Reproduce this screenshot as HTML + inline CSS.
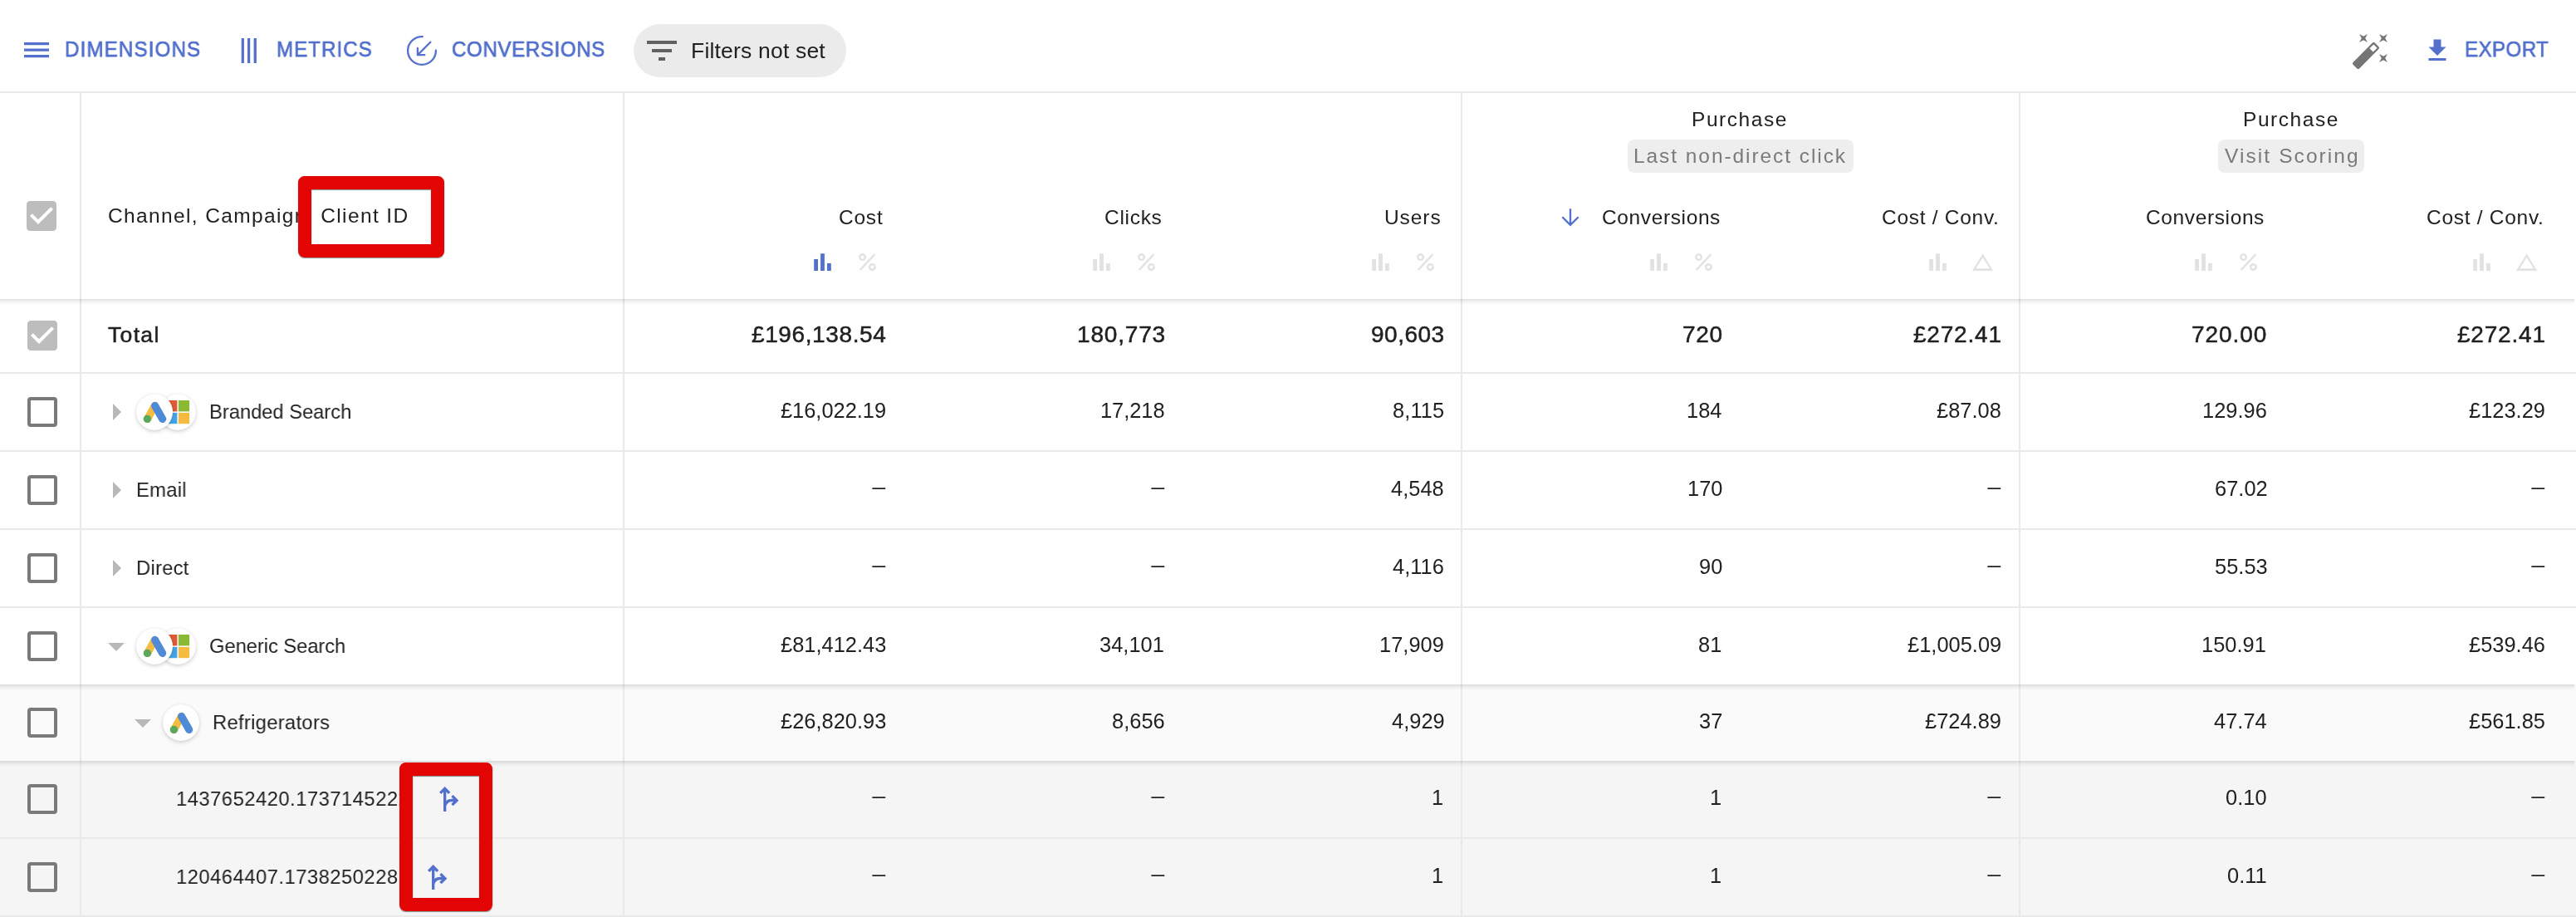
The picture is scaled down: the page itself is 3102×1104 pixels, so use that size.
<!DOCTYPE html>
<html lang="en"><head><meta charset="utf-8"><title>Report table</title>
<style>
html,body{margin:0;padding:0}
body{width:3102px;height:1104px;overflow:hidden;position:relative;background:#fff;font-family:'Liberation Sans',sans-serif;color:#212121}
.a{position:absolute}
.t{position:absolute;white-space:nowrap;line-height:1;will-change:transform}
.hl{position:absolute;left:0;width:3102px;height:2px;background:#ebe9e8}
.vl{position:absolute;width:2px;background:#ebe9e8}
.cb{position:absolute;left:33px;width:28px;height:28px;border:4px solid #7a7a7a;border-radius:4px}
.cbc{position:absolute;left:33px;width:36px;height:36px;background:#bdbdbd;border-radius:4px}
.ic{position:absolute;width:44px;height:44px;border-radius:50%;background:#fff;box-shadow:0 2px 5px rgba(0,0,0,.16),0 0 2px rgba(0,0,0,.08)}
.chip{position:absolute;background:#eee;border-radius:8px;height:40px;top:168px}
.red{position:absolute;box-sizing:border-box;border:16px solid #e30404;border-radius:7.5px;box-shadow:0 1px 1px rgba(0,40,40,.5),inset 0 1px 1px rgba(0,40,40,.5)}
svg{position:absolute;overflow:visible}
</style></head><body>
<div class="a" style="left:0;top:824px;width:3102px;height:92px;background:#fafafa"></div>
<div class="a" style="left:0;top:916px;width:3102px;height:188px;background:#f5f5f5"></div>
<div class="hl" style="top:110px"></div>
<div class="hl" style="top:448px"></div>
<div class="hl" style="top:542px"></div>
<div class="hl" style="top:636px"></div>
<div class="hl" style="top:730px"></div>
<div class="hl" style="top:1008px"></div>
<div class="hl" style="top:1102px"></div>
<div class="vl" style="left:96px;top:112px;height:992px"></div>
<div class="vl" style="left:750px;top:112px;height:992px"></div>
<div class="vl" style="left:1759px;top:112px;height:992px"></div>
<div class="vl" style="left:2431px;top:112px;height:992px"></div>
<div class="a" style="left:0;top:360px;width:3100px;height:8px;background:linear-gradient(to bottom,rgba(0,0,0,0.12) 0,rgba(0,0,0,0.066) 30%,rgba(0,0,0,0.018) 65%,rgba(0,0,0,0) 100%)"></div>
<div class="a" style="left:0;top:824px;width:3100px;height:8px;background:linear-gradient(to bottom,rgba(0,0,0,0.12) 0,rgba(0,0,0,0.066) 30%,rgba(0,0,0,0.018) 65%,rgba(0,0,0,0) 100%)"></div>
<div class="a" style="left:0;top:916px;width:3100px;height:8px;background:linear-gradient(to bottom,rgba(0,0,0,0.12) 0,rgba(0,0,0,0.066) 30%,rgba(0,0,0,0.018) 65%,rgba(0,0,0,0) 100%)"></div>
<div class="a" style="left:763px;top:29px;width:256px;height:64px;border-radius:32px;background:#ebebeb"></div>
<svg style="left:29px;top:51px" width="30" height="19" viewBox="0 0 30 19"><path fill="#5270cc" d="M0 0h30v3.2H0zM0 7.6h30v3.2H0zM0 15.1h30v3.2H0z"/></svg>
<svg style="left:290px;top:46px" width="20" height="30" viewBox="0 0 20 30"><path fill="#5270cc" d="M0.7 0h3.2v30H0.7zM8 0h3.2v30H8zM15.6 0h3.3v30h-3.3z"/></svg>
<svg style="left:488px;top:41px" width="40" height="40" viewBox="0 0 40 40" fill="none" stroke="#5270cc" stroke-width="2.3" stroke-linecap="round" stroke-linejoin="round"><path d="M36.9 19.6A16.9 16.9 0 1 1 20.8 3.1"/><path d="M30.3 9.8L14.9 25.2M14.9 17v8.2h8.4"/></svg>
<svg style="left:773px;top:37px" width="48" height="48" viewBox="0 0 24 24"><path fill="#616161" d="M10 18h4v-2h-4v2zM3 6v2h18V6H3zm3 7h12v-2H6v2z"/></svg>
<svg style="left:2831px;top:37px" width="48" height="48" viewBox="0 0 24 24"><path fill="#757575" d="M7.5 5.6 10 7 8.6 4.5 10 2 7.5 3.4 5 2l1.4 2.5L5 7zm12 9.8L17 14l1.4 2.5L17 19l2.5-1.4L22 19l-1.4-2.5L22 14zM22 2l-2.5 1.4L17 2l1.4 2.5L17 7l2.5-1.4L22 7l-1.4-2.5zm-7.63 5.29a.9959.9959 0 0 0-1.41 0L1.29 18.96c-.39.39-.39 1.02 0 1.41l2.34 2.34c.39.39 1.02.39 1.41 0L16.7 11.05c.39-.39.39-1.02 0-1.41zm-1.03 5.49-2.12-2.12 2.44-2.44 2.12 2.12z"/></svg>
<svg style="left:2917px;top:43px" width="36" height="36" viewBox="0 0 24 24"><path fill="#5270cc" d="M5 20h14v-2H5v2zM19 9h-4V3H9v6H5l7 7 7-7z"/></svg>
<div class="chip" style="left:1960px;width:272px"></div>
<div class="chip" style="left:2671px;width:176px"></div>
<svg style="left:1875px;top:245px" width="32" height="32" viewBox="1875 245 32 32" fill="none" stroke="#5270cc" stroke-width="2.3"><path d="M1891 251.2V270.6M1881.3 261.2L1891 270.9L1900.7 261.2"/></svg>
<svg style="left:980.0px;top:305px" width="21" height="21" viewBox="0 0 21 21"><path fill="#5270cc" d="M0.2 7h4.8v14H0.2zM8.1 0.2h4.8V21H8.1zM16 12.1h4.8V21H16z"/></svg>
<svg style="left:1034.0px;top:305px" width="21" height="21" viewBox="0 0 21 21" fill="none" stroke="#e2e2e2" stroke-width="2.4"><circle cx="4.6" cy="4.6" r="3.3"/><circle cx="16.4" cy="16.5" r="3.3"/><path d="M19.3 1.2L1.6 20.1"/></svg>
<svg style="left:1316.0px;top:305px" width="21" height="21" viewBox="0 0 21 21"><path fill="#e2e2e2" d="M0.2 7h4.8v14H0.2zM8.1 0.2h4.8V21H8.1zM16 12.1h4.8V21H16z"/></svg>
<svg style="left:1370.0px;top:305px" width="21" height="21" viewBox="0 0 21 21" fill="none" stroke="#e2e2e2" stroke-width="2.4"><circle cx="4.6" cy="4.6" r="3.3"/><circle cx="16.4" cy="16.5" r="3.3"/><path d="M19.3 1.2L1.6 20.1"/></svg>
<svg style="left:1651.8px;top:305px" width="21" height="21" viewBox="0 0 21 21"><path fill="#e2e2e2" d="M0.2 7h4.8v14H0.2zM8.1 0.2h4.8V21H8.1zM16 12.1h4.8V21H16z"/></svg>
<svg style="left:1706.2px;top:305px" width="21" height="21" viewBox="0 0 21 21" fill="none" stroke="#e2e2e2" stroke-width="2.4"><circle cx="4.6" cy="4.6" r="3.3"/><circle cx="16.4" cy="16.5" r="3.3"/><path d="M19.3 1.2L1.6 20.1"/></svg>
<svg style="left:1987.0px;top:305px" width="21" height="21" viewBox="0 0 21 21"><path fill="#e2e2e2" d="M0.2 7h4.8v14H0.2zM8.1 0.2h4.8V21H8.1zM16 12.1h4.8V21H16z"/></svg>
<svg style="left:2041.2px;top:305px" width="21" height="21" viewBox="0 0 21 21" fill="none" stroke="#e2e2e2" stroke-width="2.4"><circle cx="4.6" cy="4.6" r="3.3"/><circle cx="16.4" cy="16.5" r="3.3"/><path d="M19.3 1.2L1.6 20.1"/></svg>
<svg style="left:2323.1px;top:305px" width="21" height="21" viewBox="0 0 21 21"><path fill="#e2e2e2" d="M0.2 7h4.8v14H0.2zM8.1 0.2h4.8V21H8.1zM16 12.1h4.8V21H16z"/></svg>
<svg style="left:2375.0px;top:305px" width="25.2" height="21" viewBox="0 0 25.2 21"><path fill="#e2e2e2" fill-rule="evenodd" d="M12.6 0.5L25.2 21H0zM12.6 4.9L4.3 18.3h16.6z"/></svg>
<svg style="left:2642.8px;top:305px" width="21" height="21" viewBox="0 0 21 21"><path fill="#e2e2e2" d="M0.2 7h4.8v14H0.2zM8.1 0.2h4.8V21H8.1zM16 12.1h4.8V21H16z"/></svg>
<svg style="left:2697.3px;top:305px" width="21" height="21" viewBox="0 0 21 21" fill="none" stroke="#e2e2e2" stroke-width="2.4"><circle cx="4.6" cy="4.6" r="3.3"/><circle cx="16.4" cy="16.5" r="3.3"/><path d="M19.3 1.2L1.6 20.1"/></svg>
<svg style="left:2978.0px;top:305px" width="21" height="21" viewBox="0 0 21 21"><path fill="#e2e2e2" d="M0.2 7h4.8v14H0.2zM8.1 0.2h4.8V21H8.1zM16 12.1h4.8V21H16z"/></svg>
<svg style="left:3030.2px;top:305px" width="25.2" height="21" viewBox="0 0 25.2 21"><path fill="#e2e2e2" fill-rule="evenodd" d="M12.6 0.5L25.2 21H0zM12.6 4.9L4.3 18.3h16.6z"/></svg>
<svg style="left:26px;top:236px" width="48" height="48" viewBox="0 0 24 24"><path fill="#bdbdbd" d="M19 3H5c-1.11 0-2 .9-2 2v14c0 1.1.89 2 2 2h14c1.11 0 2-.9 2-2V5c0-1.1-.89-2-2-2zm-9 14l-5-5 1.41-1.41L10 14.17l7.59-7.59L19 8l-9 9z"/></svg>
<svg style="left:27px;top:380px" width="48" height="48" viewBox="0 0 24 24"><path fill="#bdbdbd" d="M19 3H5c-1.11 0-2 .9-2 2v14c0 1.1.89 2 2 2h14c1.11 0 2-.9 2-2V5c0-1.1-.89-2-2-2zm-9 14l-5-5 1.41-1.41L10 14.17l7.59-7.59L19 8l-9 9z"/></svg>
<div class="cb" style="top:478px"></div>
<div class="cb" style="top:572px"></div>
<div class="cb" style="top:666px"></div>
<div class="cb" style="top:760px"></div>
<div class="cb" style="top:852px"></div>
<div class="cb" style="top:944px"></div>
<div class="cb" style="top:1038px"></div>
<svg style="left:136px;top:486px" width="10" height="20" viewBox="0 0 10 20"><path fill="#b8b8b8" d="M0 0l10 10L0 20z"/></svg>
<svg style="left:136px;top:580px" width="10" height="20" viewBox="0 0 10 20"><path fill="#b8b8b8" d="M0 0l10 10L0 20z"/></svg>
<svg style="left:136px;top:674px" width="10" height="20" viewBox="0 0 10 20"><path fill="#b8b8b8" d="M0 0l10 10L0 20z"/></svg>
<svg style="left:130px;top:774px" width="20" height="10" viewBox="0 0 20 10"><path fill="#b8b8b8" d="M0 0h20L10 10z"/></svg>
<svg style="left:161.6px;top:866px" width="20" height="10" viewBox="0 0 20 10"><path fill="#b8b8b8" d="M0 0h20L10 10z"/></svg>
<div class="ic" style="left:192px;top:474px"></div><svg style="left:192px;top:474px" width="44" height="44" viewBox="0 0 44 44"><path fill="#e05a35" d="M8.2 8h13.2v13.4H8.2z"/><path fill="#8ab933" d="M22.9 8h13.2v13.4H22.9z"/><path fill="#45a4e6" d="M8.2 22.9h13.2v13.3H8.2z"/><path fill="#f5bb40" d="M22.9 22.9h13.2v13.3H22.9z"/></svg>
<div class="ic" style="left:164px;top:474px"></div><svg style="left:164px;top:474px" width="44" height="44" viewBox="0 0 44 44" stroke-linecap="round" stroke-width="9.2" fill="none"><path stroke="#f4bc41" d="M13.5 30.4L22.4 14.5"/><path stroke="#4f8ad6" d="M22.6 14.4L31.7 30.4"/><circle cx="13.4" cy="30.4" r="4.7" fill="#5aa85c"/></svg>
<div class="ic" style="left:192px;top:756px"></div><svg style="left:192px;top:756px" width="44" height="44" viewBox="0 0 44 44"><path fill="#e05a35" d="M8.2 8h13.2v13.4H8.2z"/><path fill="#8ab933" d="M22.9 8h13.2v13.4H22.9z"/><path fill="#45a4e6" d="M8.2 22.9h13.2v13.3H8.2z"/><path fill="#f5bb40" d="M22.9 22.9h13.2v13.3H22.9z"/></svg>
<div class="ic" style="left:164px;top:756px"></div><svg style="left:164px;top:756px" width="44" height="44" viewBox="0 0 44 44" stroke-linecap="round" stroke-width="9.2" fill="none"><path stroke="#f4bc41" d="M13.5 30.4L22.4 14.5"/><path stroke="#4f8ad6" d="M22.6 14.4L31.7 30.4"/><circle cx="13.4" cy="30.4" r="4.7" fill="#5aa85c"/></svg>
<div class="ic" style="left:196px;top:848px"></div><svg style="left:196px;top:848px" width="44" height="44" viewBox="0 0 44 44" stroke-linecap="round" stroke-width="9.2" fill="none"><path stroke="#f4bc41" d="M13.5 30.4L22.4 14.5"/><path stroke="#4f8ad6" d="M22.6 14.4L31.7 30.4"/><circle cx="13.4" cy="30.4" r="4.7" fill="#5aa85c"/></svg>
<svg style="left:519.3px;top:942px" width="40" height="40" viewBox="0 0 24 24"><path fill="#5270cc" d="M14.59 15.59 16 17l4-4-4-4-1.41 1.41L16.17 12c-1.51-.33-3.73.08-5.17 1.36V6.83l1.59 1.59L14 7l-4-4-4 4 1.41 1.41L9 6.83V21h2v-4c.73-2.58 3.07-3.47 5.17-3l-1.58 1.59z"/></svg>
<svg style="left:505.1px;top:1036px" width="40" height="40" viewBox="0 0 24 24"><path fill="#5270cc" d="M14.59 15.59 16 17l4-4-4-4-1.41 1.41L16.17 12c-1.51-.33-3.73.08-5.17 1.36V6.83l1.59 1.59L14 7l-4-4-4 4 1.41 1.41L9 6.83V21h2v-4c.73-2.58 3.07-3.47 5.17-3l-1.58 1.59z"/></svg>
<div class="t" style="left:77.5px;top:46px;font-size:26.2px;letter-spacing:1.27px;color:#5270cc;-webkit-text-stroke:0.75px currentColor;transform:scaleX(.92);transform-origin:0 50%;">DIMENSIONS</div>
<div class="t" style="left:332.6px;top:46px;font-size:26.2px;letter-spacing:1.16px;color:#5270cc;-webkit-text-stroke:0.75px currentColor;transform:scaleX(.92);transform-origin:0 50%;">METRICS</div>
<div class="t" style="left:543.5px;top:46px;font-size:26.2px;letter-spacing:0.68px;color:#5270cc;-webkit-text-stroke:0.75px currentColor;transform:scaleX(.92);transform-origin:0 50%;">CONVERSIONS</div>
<div class="t" style="left:2967.5px;top:46px;font-size:26.2px;letter-spacing:0.47px;color:#5270cc;-webkit-text-stroke:0.75px currentColor;transform:scaleX(.92);transform-origin:0 50%;">EXPORT</div>
<div class="t" style="left:832.2px;top:48px;font-size:26.5px;letter-spacing:0.19px;">Filters not set</div>
<div class="t" style="left:130.0px;top:248px;font-size:24.5px;letter-spacing:1.37px;">Channel, Campaign, Client ID</div>
<div class="t" style="left:1010.0px;top:250px;font-size:24.5px;letter-spacing:0.77px;">Cost</div>
<div class="t" style="left:1330.0px;top:250px;font-size:24.5px;letter-spacing:0.7px;">Clicks</div>
<div class="t" style="left:1666.7px;top:250px;font-size:24.5px;letter-spacing:0.93px;">Users</div>
<div class="t" style="left:1928.7px;top:250px;font-size:24.5px;letter-spacing:0.62px;">Conversions</div>
<div class="t" style="left:2266.0px;top:250px;font-size:24.5px;letter-spacing:0.72px;">Cost / Conv.</div>
<div class="t" style="left:2584.0px;top:250px;font-size:24.5px;letter-spacing:0.62px;">Conversions</div>
<div class="t" style="left:2921.6px;top:250px;font-size:24.5px;letter-spacing:0.72px;">Cost / Conv.</div>
<div class="t" style="left:2037.3px;top:132px;font-size:24.5px;letter-spacing:1.56px;">Purchase</div>
<div class="t" style="left:2700.5px;top:132px;font-size:24.5px;letter-spacing:1.56px;">Purchase</div>
<div class="t" style="left:1966.9px;top:176px;font-size:24.5px;letter-spacing:1.93px;color:#7a7a7a;">Last non-direct click</div>
<div class="t" style="left:2679.0px;top:176px;font-size:24.5px;letter-spacing:2.08px;color:#7a7a7a;">Visit Scoring</div>
<div class="t" style="left:130.3px;top:390px;font-size:26.6px;letter-spacing:1.28px;-webkit-text-stroke:0.5px currentColor;">Total</div>
<div class="t" style="left:905.3px;top:389px;font-size:28.0px;letter-spacing:0.61px;-webkit-text-stroke:0.5px currentColor;">£196,138.54</div>
<div class="t" style="left:1296.7px;top:389px;font-size:28.0px;letter-spacing:0.82px;-webkit-text-stroke:0.5px currentColor;">180,773</div>
<div class="t" style="left:1650.5px;top:389px;font-size:28.0px;letter-spacing:0.5px;-webkit-text-stroke:0.5px currentColor;">90,603</div>
<div class="t" style="left:2026.4px;top:389px;font-size:28.0px;letter-spacing:0.74px;-webkit-text-stroke:0.5px currentColor;">720</div>
<div class="t" style="left:2303.7px;top:389px;font-size:28.0px;letter-spacing:0.8px;-webkit-text-stroke:0.5px currentColor;">£272.41</div>
<div class="t" style="left:2639.0px;top:389px;font-size:28.0px;letter-spacing:0.92px;-webkit-text-stroke:0.5px currentColor;">720.00</div>
<div class="t" style="left:2959.0px;top:389px;font-size:28.0px;letter-spacing:0.8px;-webkit-text-stroke:0.5px currentColor;">£272.41</div>
<div class="t" style="left:251.8px;top:484px;font-size:24.8px;letter-spacing:-0.06px;transform:scaleX(.96);transform-origin:0 50%;">Branded Search</div>
<div class="t" style="left:940.3px;top:482px;font-size:25.4px;">£16,022.19</div>
<div class="t" style="left:1324.7px;top:482px;font-size:25.4px;letter-spacing:-0.02px;">17,218</div>
<div class="t" style="left:1676.5px;top:482px;font-size:25.4px;letter-spacing:0.12px;">8,115</div>
<div class="t" style="left:2031.4px;top:482px;font-size:25.4px;letter-spacing:0.03px;">184</div>
<div class="t" style="left:2331.7px;top:482px;font-size:25.4px;letter-spacing:0.03px;">£87.08</div>
<div class="t" style="left:2652.0px;top:482px;font-size:25.4px;letter-spacing:0.03px;">129.96</div>
<div class="t" style="left:2973.0px;top:482px;font-size:25.4px;letter-spacing:0.03px;">£123.29</div>
<div class="t" style="left:163.9px;top:578px;font-size:24.8px;letter-spacing:0.28px;transform:scaleX(.96);transform-origin:0 50%;">Email</div>
<div class="t" style="left:1052.3px;top:574px;font-size:25.4px;transform:scaleX(1.13);transform-origin:100% 50%;">–</div>
<div class="t" style="left:1387.7px;top:574px;font-size:25.4px;transform:scaleX(1.13);transform-origin:100% 50%;">–</div>
<div class="t" style="left:1674.5px;top:576px;font-size:25.4px;letter-spacing:0.03px;">4,548</div>
<div class="t" style="left:2032.4px;top:576px;font-size:25.4px;letter-spacing:0.03px;">170</div>
<div class="t" style="left:2394.7px;top:574px;font-size:25.4px;transform:scaleX(1.13);transform-origin:100% 50%;">–</div>
<div class="t" style="left:2667.0px;top:576px;font-size:25.4px;letter-spacing:0.03px;">67.02</div>
<div class="t" style="left:3050.0px;top:574px;font-size:25.4px;transform:scaleX(1.13);transform-origin:100% 50%;">–</div>
<div class="t" style="left:163.9px;top:672px;font-size:24.8px;letter-spacing:0.24px;transform:scaleX(.96);transform-origin:0 50%;">Direct</div>
<div class="t" style="left:1052.3px;top:668px;font-size:25.4px;transform:scaleX(1.13);transform-origin:100% 50%;">–</div>
<div class="t" style="left:1387.7px;top:668px;font-size:25.4px;transform:scaleX(1.13);transform-origin:100% 50%;">–</div>
<div class="t" style="left:1676.5px;top:670px;font-size:25.4px;letter-spacing:0.03px;">4,116</div>
<div class="t" style="left:2046.4px;top:670px;font-size:25.4px;letter-spacing:0.03px;">90</div>
<div class="t" style="left:2394.7px;top:668px;font-size:25.4px;transform:scaleX(1.13);transform-origin:100% 50%;">–</div>
<div class="t" style="left:2667.0px;top:670px;font-size:25.4px;letter-spacing:0.03px;">55.53</div>
<div class="t" style="left:3050.0px;top:668px;font-size:25.4px;transform:scaleX(1.13);transform-origin:100% 50%;">–</div>
<div class="t" style="left:252.2px;top:766px;font-size:24.8px;letter-spacing:-0.09px;transform:scaleX(.96);transform-origin:0 50%;">Generic Search</div>
<div class="t" style="left:940.3px;top:764px;font-size:25.4px;letter-spacing:0.03px;">£81,412.43</div>
<div class="t" style="left:1323.7px;top:764px;font-size:25.4px;letter-spacing:0.03px;">34,101</div>
<div class="t" style="left:1660.5px;top:764px;font-size:25.4px;letter-spacing:0.03px;">17,909</div>
<div class="t" style="left:2045.4px;top:764px;font-size:25.4px;letter-spacing:0.03px;">81</div>
<div class="t" style="left:2296.7px;top:764px;font-size:25.4px;letter-spacing:0.03px;">£1,005.09</div>
<div class="t" style="left:2651.0px;top:764px;font-size:25.4px;letter-spacing:0.03px;">150.91</div>
<div class="t" style="left:2973.0px;top:764px;font-size:25.4px;letter-spacing:0.03px;">£539.46</div>
<div class="t" style="left:255.7px;top:858px;font-size:24.8px;letter-spacing:0.3px;transform:scaleX(.96);transform-origin:0 50%;">Refrigerators</div>
<div class="t" style="left:940.3px;top:856px;font-size:25.4px;letter-spacing:0.03px;">£26,820.93</div>
<div class="t" style="left:1338.7px;top:856px;font-size:25.4px;letter-spacing:0.03px;">8,656</div>
<div class="t" style="left:1675.5px;top:856px;font-size:25.4px;letter-spacing:0.03px;">4,929</div>
<div class="t" style="left:2046.4px;top:856px;font-size:25.4px;letter-spacing:0.03px;">37</div>
<div class="t" style="left:2317.7px;top:856px;font-size:25.4px;letter-spacing:0.03px;">£724.89</div>
<div class="t" style="left:2666.0px;top:856px;font-size:25.4px;letter-spacing:0.03px;">47.74</div>
<div class="t" style="left:2973.0px;top:856px;font-size:25.4px;letter-spacing:0.03px;">£561.85</div>
<div class="t" style="left:211.7px;top:950px;font-size:24.8px;letter-spacing:0.49px;width:282px;overflow:hidden;transform:scaleX(.96);transform-origin:0 50%;">1437652420.1737145222</div>
<div class="t" style="left:1052.3px;top:946px;font-size:25.4px;transform:scaleX(1.13);transform-origin:100% 50%;">–</div>
<div class="t" style="left:1387.7px;top:946px;font-size:25.4px;transform:scaleX(1.13);transform-origin:100% 50%;">–</div>
<div class="t" style="left:1723.5px;top:948px;font-size:25.4px;letter-spacing:0.03px;">1</div>
<div class="t" style="left:2059.4px;top:948px;font-size:25.4px;letter-spacing:0.03px;">1</div>
<div class="t" style="left:2394.7px;top:946px;font-size:25.4px;transform:scaleX(1.13);transform-origin:100% 50%;">–</div>
<div class="t" style="left:2680.0px;top:948px;font-size:25.4px;letter-spacing:0.03px;">0.10</div>
<div class="t" style="left:3050.0px;top:946px;font-size:25.4px;transform:scaleX(1.13);transform-origin:100% 50%;">–</div>
<div class="t" style="left:211.7px;top:1044px;font-size:24.8px;letter-spacing:0.49px;transform:scaleX(.96);transform-origin:0 50%;">120464407.1738250228</div>
<div class="t" style="left:1052.3px;top:1040px;font-size:25.4px;transform:scaleX(1.13);transform-origin:100% 50%;">–</div>
<div class="t" style="left:1387.7px;top:1040px;font-size:25.4px;transform:scaleX(1.13);transform-origin:100% 50%;">–</div>
<div class="t" style="left:1723.5px;top:1042px;font-size:25.4px;letter-spacing:0.03px;">1</div>
<div class="t" style="left:2059.4px;top:1042px;font-size:25.4px;letter-spacing:0.03px;">1</div>
<div class="t" style="left:2394.7px;top:1040px;font-size:25.4px;transform:scaleX(1.13);transform-origin:100% 50%;">–</div>
<div class="t" style="left:2682.0px;top:1042px;font-size:25.4px;letter-spacing:0.03px;">0.11</div>
<div class="t" style="left:3050.0px;top:1040px;font-size:25.4px;transform:scaleX(1.13);transform-origin:100% 50%;">–</div>
<div class="red" style="left:359px;top:212px;width:176px;height:98px"></div>
<div class="red" style="left:481px;top:918px;width:112px;height:179px"></div>
</body></html>
